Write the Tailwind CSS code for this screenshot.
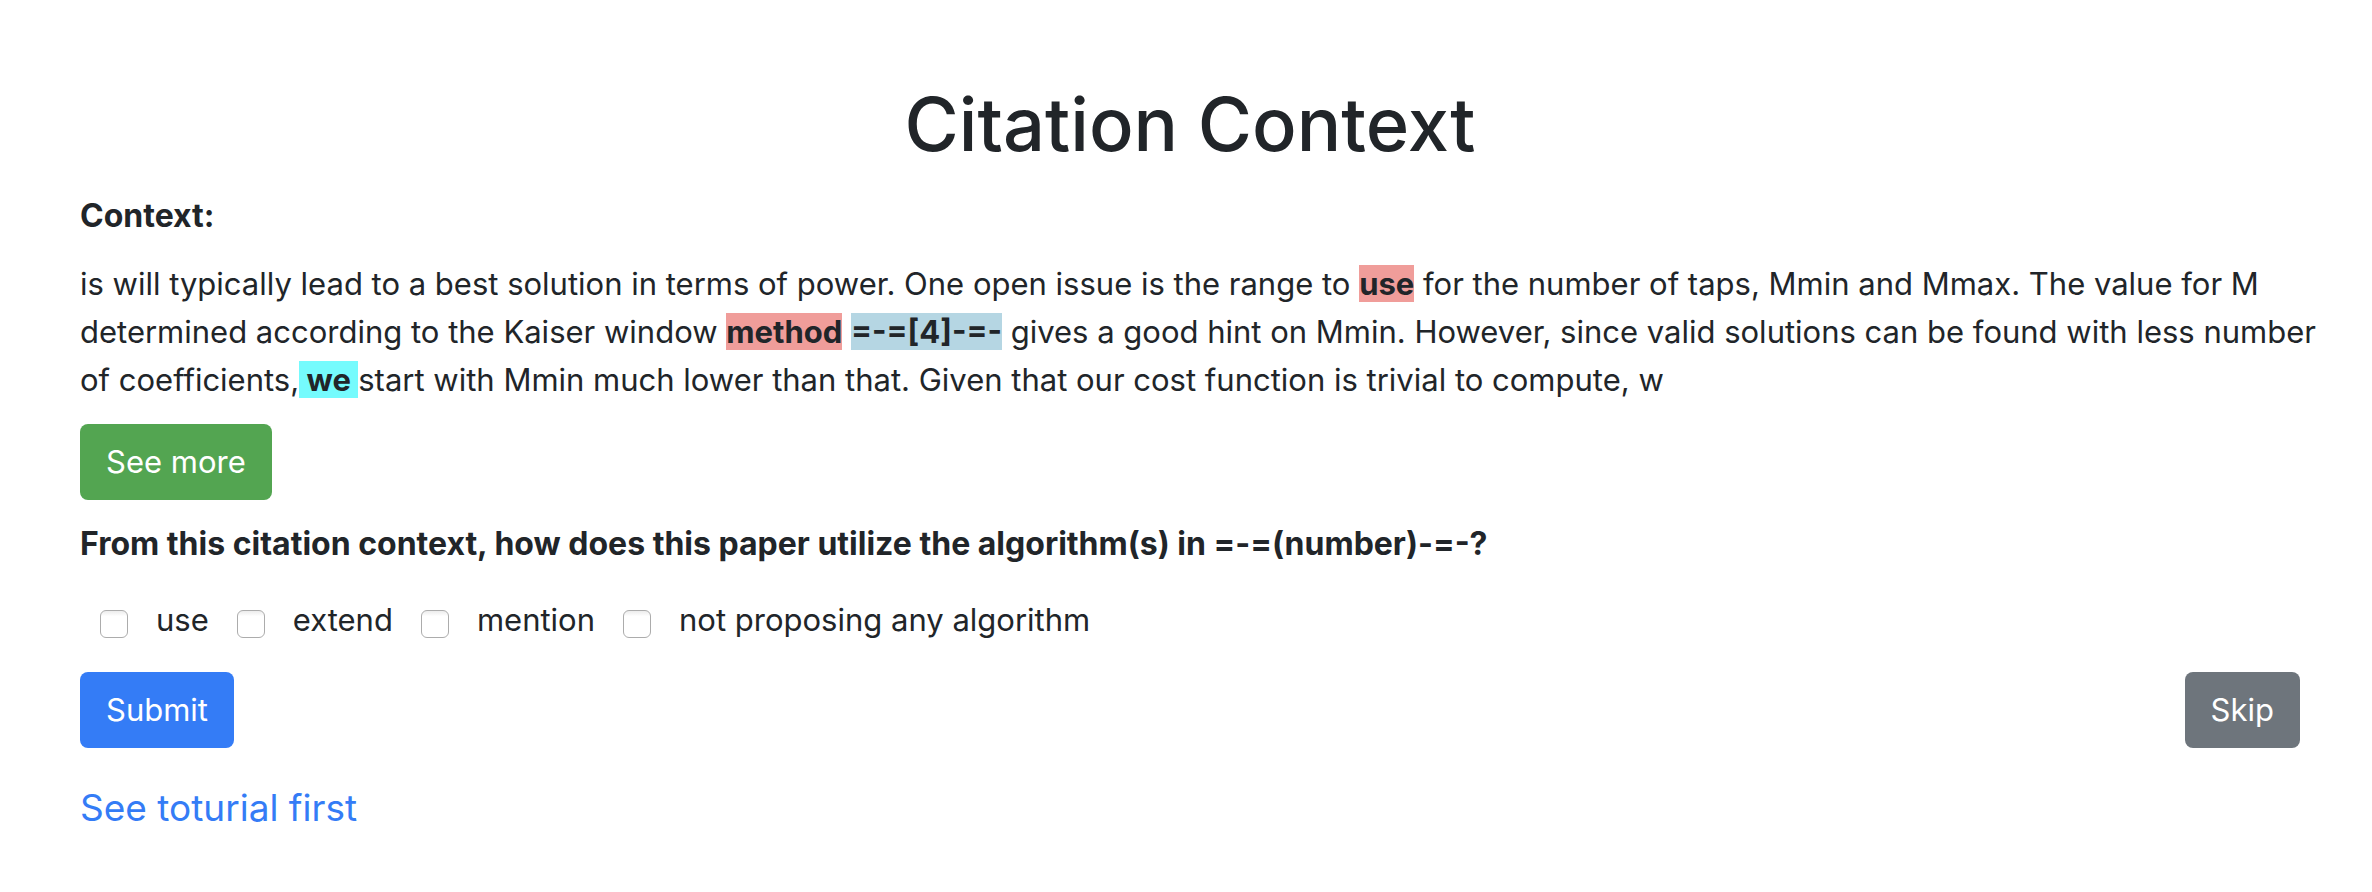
<!DOCTYPE html>
<html lang="en">
<head>
<meta charset="utf-8">
<title>Citation Context</title>
<script src="https://cdn.jsdelivr.net/npm/@tailwindcss/browser@4"></script>
</head>
<body class="bg-white text-[#212529] font-['Inter',sans-serif] text-[31px] leading-12">
<main class="pl-20 pr-18 pt-19">
  <h1 class="text-center text-[74px] leading-24 font-medium">Citation Context</h1>
  <h2 class="mt-5 text-[32px] font-bold">Context:</h2>
  <p class="mt-5 -mr-8">is will typically lead to a best solution in terms of power. One open issue is the range to <mark class="bg-[#f09d9a] font-bold text-inherit">use</mark> for the number of taps, Mmin and Mmax. The value for M<br>determined according to the Kaiser window <mark class="bg-[#f09d9a] font-bold text-inherit">method</mark> <mark class="bg-[#b5d6e3] font-bold text-inherit">=-=[4]-=-</mark> gives a good hint on Mmin. However, since valid solutions can be found with less number<br>of coefficients,<mark class="bg-[#75fbfd] font-bold text-inherit"> we </mark>start with Mmin much lower than that. Given that our cost function is trivial to compute, w</p>
  <button type="button" class="mt-5 h-19 rounded-lg bg-[#53a551] px-[26px] text-white">See more</button>
  <form>
    <fieldset>
      <legend class="pt-5 text-[32px] font-bold">From this citation context, how does this paper utilize the algorithm(s) in =-=(number)-=-?</legend>
      <div class="mt-7 flex gap-7 pl-5">
        <label class="flex items-center gap-7"><input type="checkbox" class="mt-2 size-7 appearance-none rounded-md border border-[#acacac] bg-linear-to-b from-[#ececec] to-white to-20% checked:bg-[#347cf6]">use</label>
        <label class="flex items-center gap-7"><input type="checkbox" class="mt-2 size-7 appearance-none rounded-md border border-[#acacac] bg-linear-to-b from-[#ececec] to-white to-20% checked:bg-[#347cf6]">extend</label>
        <label class="flex items-center gap-7"><input type="checkbox" class="mt-2 size-7 appearance-none rounded-md border border-[#acacac] bg-linear-to-b from-[#ececec] to-white to-20% checked:bg-[#347cf6]">mention</label>
        <label class="flex items-center gap-7"><input type="checkbox" class="mt-2 size-7 appearance-none rounded-md border border-[#acacac] bg-linear-to-b from-[#ececec] to-white to-20% checked:bg-[#347cf6]">not proposing any algorithm</label>
      </div>
    </fieldset>
    <div class="mt-7 flex justify-between">
      <button type="submit" class="h-19 rounded-lg bg-[#347cf6] px-[26px] text-white">Submit</button>
      <button type="button" class="h-19 rounded-lg bg-[#6e757c] px-[26px] text-white">Skip</button>
    </div>
  </form>
  <a href="#" class="mt-9 inline-block text-[37px] text-[#347cf6]">See toturial first</a>
</main>
</body>
</html>
